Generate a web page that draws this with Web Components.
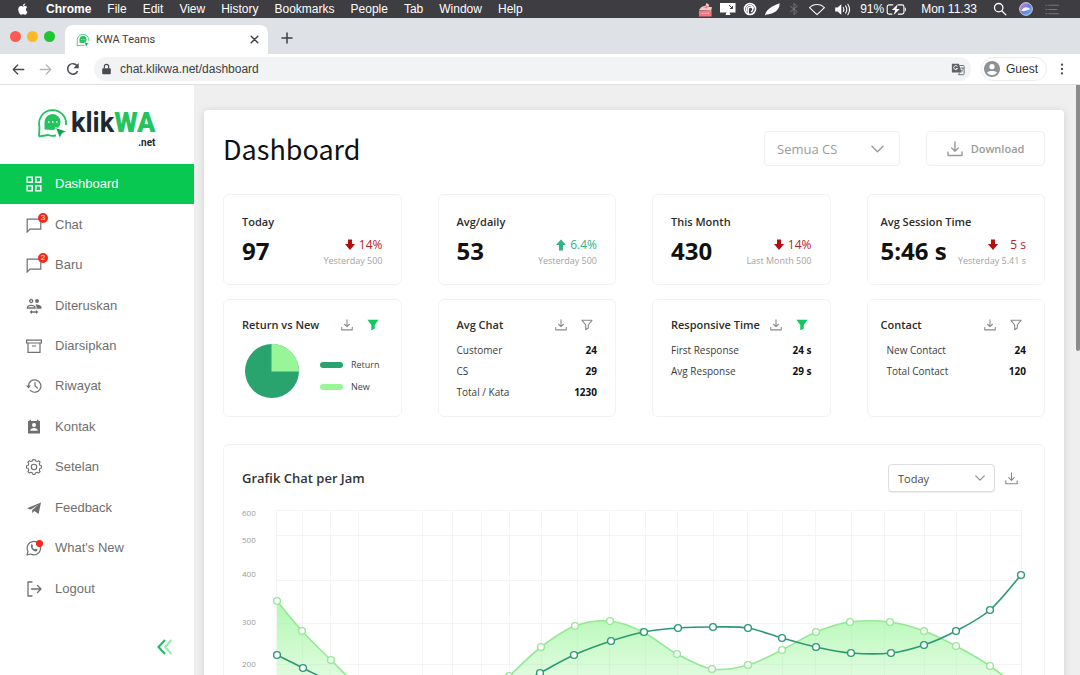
<!DOCTYPE html>
<html lang="id">
<head>
<meta charset="utf-8">
<meta name="viewport" content="width=device-width, initial-scale=1">
<title>KWA Teams</title>
<style>
  html, body { margin: 0; height: 100%; }
  body { overflow: hidden; font-family: "Liberation Sans", Arial, sans-serif; background: #efefef; }
</style>
</head>
<body>
<kwa-desktop></kwa-desktop>

<script>
const define = (name, html, setup) => {
  const tpl = document.createElement('template');
  tpl.innerHTML = html;
  customElements.define(name, class extends HTMLElement {
    constructor() {
      super();
      this.attachShadow({ mode: 'open' }).append(tpl.content.cloneNode(true));
    }
    connectedCallback() { if (setup) setup.call(this, this.shadowRoot); }
  });
};

/* ---------- icons: [viewBox, markup] ---------- */
const line = (w, body) => `<g fill="none" stroke="currentColor" stroke-width="${w}" stroke-linecap="round" stroke-linejoin="round">${body}</g>`;
const ICONS = {
  apple: ['0 0 24 24', '<path fill="currentColor" d="M17.1 12.7c0-2.4 2-3.6 2.1-3.7-1.2-1.7-3-1.9-3.6-2-1.500-.2-3 .9-3.700.9-.8 0-2-.9-3.200-.9-1.700 0-3.200 1-4.100 2.500-1.700 3-.4 7.500 1.300 10 .8 1.200 1.800 2.500 3.100 2.500 1.300-.1 1.700-.8 3.200-.8s1.900.8 3.200.8 2.200-1.200 3-2.400c.9-1.400 1.300-2.700 1.300-2.800 0 0-2.600-1-2.600-4.100zM14.700 5.500c.7-.8 1.100-2 1-3.100-1 0-2.200.7-2.900 1.500-.6.7-1.200 1.900-1 3 1.100.1 2.200-.6 2.900-1.400z"/>'],
  recorder: ['0 0 16 16', '<path fill="#f4767c" d="M1 9h13.500v6.500H1z"/><path fill="#f9c9cb" d="M1 8.500 4 5l4-1 1-3 3 2-1 2 4 .5-1 3.500z"/><path fill="#f4767c" d="m5 6 3-.5.5-2 2 1-.5 2.500z"/><path stroke="#ffd9dc" d="M4 12h8" fill="none" stroke-dasharray="2 1"/>'],
  display: ['0 0 16 16', '<path fill="currentColor" d="M0 2h15.500v9.500H9.500l1 2.500h-5l1-2.500H0z"/><path stroke="#3e3d42" d="m9 4 3.500 3.500M12.500 5v2.500H10" fill="none"/>'],
  swirl: ['0 0 16 16', '<circle cx="8" cy="8" r="6.300" fill="none" stroke="currentColor" stroke-width="1.800"/><path fill="none" stroke="currentColor" stroke-width="1.600" d="M6 14V8.500A2.600 2.600 0 1 1 9 11M4 11V8a4 4 0 0 1 8-.5"/>'],
  feather: ['0 0 18 16', '<path fill="currentColor" d="M1 15C2 8.500 8 4.500 17.500 1c.5 5-3 9-6.500 10.500-3 1.800-6 2.200-8.500 2.200z"/>'],
  bluetooth: ['0 0 16 16', line(1.1, '<path d="m4 5 7.500 6L8 14.500v-13L11.500 5 4 11"/>')],
  wifi: ['0 0 20 16', line(1.2, '<path d="M1.500 6.500C6 1.500 14 1.500 18.500 6.500L10 14.500z"/>')],
  volume: ['0 0 20 16', '<path fill="currentColor" d="M1 5.500h3l4.500-4v13L4 10.500H1z"/>' + line(1.3, '<path d="M11 5.500q1.500 2.500 0 5M13.800 3.500q3 4.500 0 9M16.600 1.500q4.200 6.500 0 13"/>')],
  battery: ['0 0 22 14', line(1.2, '<path d="M7 2H3a2 2 0 0 0-2 2v6a2 2 0 0 0 2 2h3M13 2h4a2 2 0 0 1 2 2v6a2 2 0 0 1-2 2h-4"/>') + '<path fill="currentColor" d="M12.500 1 6 7.600h3.600L8 13l6.500-6.600h-3.600zM20 5h1v4h-1z"/>'],
  search: ['0 0 16 16', line(1.5, '<circle cx="6.500" cy="6.500" r="4.800"/><path d="m10.200 10.200 4.500 4.500"/>')],
  siri: ['0 0 16 16', '<defs><linearGradient id="s" x1="0" y1="0" x2="1" y2="1"><stop offset="0" stop-color="#e58ad0"/><stop offset=".5" stop-color="#6a7be8"/><stop offset="1" stop-color="#4fc0e4"/></linearGradient></defs><circle cx="8" cy="8" r="7.300" fill="url(#s)" stroke="#d9d5e8" stroke-width="1"/><path d="M2.500 10C5 5 11 5 13.500 9 11 7.500 8 12 2.500 10z" fill="#f3f1ff"/>'],
  menulist: ['0 0 16 16', line(1.1, '<path d="M1 3.500h1M4 3.500h10.500M1 8h1M4 8h8.500M1 12.500h1M4 12.500h10.500"/>')],
  close: ['0 0 10 10', line(1.3, '<path d="m2 2 6 6M8 2 2 8"/>')],
  plus: ['0 0 12 12', line(1.5, '<path d="M6 1v10M1 6h10"/>')],
  back: ['0 0 16 16', line(1.6, '<path d="M14.500 8h-13M7 2.500 1.500 8 7 13.500"/>')],
  forward: ['0 0 16 16', line(1.6, '<path d="M1.500 8h13M9 2.500 14.500 8 9 13.500"/>')],
  reload: ['0 0 16 16', '<path d="M13.300 10.500A6 6 0 1 1 12.500 4" fill="none" stroke="currentColor" stroke-width="1.700"/><path fill="currentColor" d="M14.500 1v6H8.500z"/>'],
  lock: ['0 0 12 14', '<path fill="currentColor" d="M2 6h8a1 1 0 0 1 1 1v5a1 1 0 0 1-1 1H2a1 1 0 0 1-1-1V7a1 1 0 0 1 1-1z"/><path d="M3.500 6V4a2.500 2.500 0 0 1 5 0v2" fill="none" stroke="currentColor" stroke-width="1.400"/>'],
  translate: ['0 0 16 16', '<path fill="#5f6368" d="M1 2h8l3 10H2a1 1 0 0 1-1-1z"/><path d="M7.300 5A2.300 2.300 0 1 0 7.500 7.500H5.500" stroke="#fff" fill="none"/><path d="M9.500 4H14a1 1 0 0 1 1 1v8.500a1 1 0 0 1-1 1H8.500l1.500-2.500" fill="none" stroke="#5f6368"/><path d="M10.500 7h4M12.500 6v1M14 7q-.5 2.500-2.500 4M11 8.500l2.500 2.500" fill="none" stroke="#5f6368" stroke-width=".8"/>'],
  avatar: ['0 0 16 16', '<circle cx="8" cy="8" r="8" fill="#8d9094"/><circle cx="8" cy="5.700" r="2.600" fill="#fff"/><path fill="#fff" d="M3 11.800c1-2.300 9-2.300 10 0a6.300 6.300 0 0 1-10 0z"/>'],
  dots: ['0 0 4 16', '<g fill="currentColor"><circle cx="2" cy="3" r="1.300"/><circle cx="2" cy="8" r="1.300"/><circle cx="2" cy="13" r="1.300"/></g>'],
  mark: ['0 0 30 32', '<path d="M1.500 29.500 2 20A13.500 13.500 0 1 1 28.500 18M18.500 28.500Q14 29.500 10.500 28L1.500 29.500" fill="none" stroke="#23c45e" stroke-width="1.800"/><path d="M7 22.500V15A8 8 0 1 1 15.500 23z" fill="#23c45e"/><path d="M10.500 15h1.500M14.500 15h1.500M18.500 15H20" stroke="#fff" stroke-width="1.600"/><path d="m18 20.500 11.300 3.900-4.600 2-2.400 5.200z" fill="#12a150" stroke="#fff" stroke-width=".8"/>'],
  grid: ['0 0 16 16', '<g fill="none" stroke="currentColor" stroke-width="1.500"><path d="M1.200 1.200h5v5h-5zM9.800 1.200h5v5h-5zM1.200 9.800h5v5h-5zM9.800 9.800h5v5h-5z"/></g>'],
  chat: ['0 0 16 16', '<path d="M1.200 15V2.200h13.600v10H4z" fill="none" stroke="currentColor" stroke-width="1.200"/>'],
  people: ['0 0 16 16', '<g fill="none" stroke="currentColor" stroke-width="1.300"><circle cx="5.200" cy="3" r="1.500"/><path d="M1.500 10V8.800c1-2 6.400-2 7.400 0V10z"/></g><circle cx="11" cy="3" r="2" fill="currentColor"/><path fill="currentColor" d="M9.500 6.700c2.500-.4 5.500.5 6 2.300v1.700h-5q.4-2.500-1-4zM6 12v1.300h4V12l2.500 2L10 16v-1.300H6V16l-2.500-2z"/>'],
  archive: ['0 0 16 16', '<g fill="none" stroke="currentColor" stroke-width="1.200"><path d="M.6 2.200h14.800v2.800H.6zM2 5v9.300h12V5M6 8h4"/></g>'],
  history: ['0 0 16 16', line(1.2, '<path d="M2.500 8A6.200 6.200 0 1 1 4.300 12.400M9 4.500V8l2.300 2"/>') + '<path fill="currentColor" d="M0 7.500h5L2.500 10.500z"/>'],
  contact: ['0 0 16 16', '<path fill="currentColor" d="M2 2h1.500V.8H5V2h6V.8h1.500V2H14v12.500H2z"/><circle cx="8" cy="6" r="2" fill="#fff"/><path fill="#fff" d="M4.300 11.800c0-3.600 7.400-3.600 7.400 0z"/>'],
  gear: ['0 0 16 16', line(1.1, '<path d="m6.700 1.800.3-1.500h2l.3 1.500 2 .8 1.300-.9 1.500 1.500-.9 1.300.8 2 1.500.3v2.200l-1.500.3-.8 2 .9 1.300-1.500 1.500-1.300-.9-2 .8-.3 1.500H7l-.3-1.500-2-.8-1.300.9-1.500-1.500.9-1.300-.8-2L.500 9V6.800L2 6.500l.8-2-.9-1.300 1.500-1.500 1.300.9z"/><circle cx="8" cy="8" r="2.700"/>')],
  send: ['0 0 16 16', '<path fill="currentColor" d="M15 2.500 12.600 14 8.300 11 6.200 13.300V10l6.300-5.400-7.800 4.800L1 8.200z"/>'],
  whatsapp: ['0 0 16 16', line(1.2, '<path d="m1 15 1-3.600A6.700 6.700 0 1 1 4.600 14z"/>') + '<path fill="currentColor" d="M5 4.700c.7-.8 1.300-.5 1.500 0l.5 1.300-.6 1c.5 1.200 1.400 2 2.600 2.500l.9-.9 1.600.8c.3.400-.3 1.900-1.600 2C7 11.300 4.200 8 5 4.700z"/>'],
  logout: ['0 0 16 16', line(1.3, '<path d="M6 1H2v14h4M5.500 8H15M11.500 4.500 15 8l-3.500 3.500"/>')],
  collapse: ['0 0 16 16', '<g fill="none" stroke-width="2"><path d="M8.500 1 2 8l6.500 7" stroke="#20b866"/><path d="M15 1 8.500 8l6.500 7" stroke="#96ecab"/></g>'],
  download: ['0 0 16 16', line(1.4, '<path d="M8 1v9M4.700 7 8 10.200 11.300 7M1 11v3.500h14V11"/>')],
  filter: ['0 0 14 14', line(1.3, '<path d="M1.200 1.500h11.600L8.500 7v3.500l-3 2V7z"/>')],
  filterOn: ['0 0 14 14', '<path fill="#10c860" d="M.5 1h13L9 7v4.500L5 13V7z"/>'],
  chevron: ['0 0 14 8', line(1.5, '<path d="m1 1 6 6 6-6"/>')],
  down: ['0 0 10 12', '<path fill="currentColor" d="M3 .5h4V5h3L5 11 0 5h3z"/>'],
  up: ['0 0 10 12', '<path fill="currentColor" d="M3 11.500h4V6h3L5 .5 0 6h3z"/>'],
};

/* <kwa-icon name w h> */
define('kwa-icon', `<style>:host{display:block;flex:none}svg{display:block}</style>`, function (root) {
  const [box, body] = ICONS[this.getAttribute('name')];
  const w = this.getAttribute('w') || 16, h = this.getAttribute('h') || w;
  root.querySelector('svg')?.remove();
  root.innerHTML += `<svg viewBox="${box}" width="${w}" height="${h}" aria-hidden="true">${body}</svg>`;
});

define('mac-menubar', `<style>
  :host{display:flex;align-items:center;justify-content:space-between;height:18px;padding:0 20px 0 16px;background:#3e3d42;color:#fff}
  nav,.status{display:flex;align-items:center}
  nav{gap:16px}
  button{all:unset;font-size:12px;line-height:18px}
  .app{font-weight:700}
  .status{gap:8px;font-size:12px;line-height:18px}
  .group{display:flex;align-items:center;gap:2px}
  .icons{gap:7px}
  .end{gap:12px;margin-left:8px}
  .time{padding-left:6px}
  .dim{color:#77767b}
</style>
<nav aria-label="Menu">
  <kwa-icon name="apple" w="14"></kwa-icon>
  <button class="app">Chrome</button><button>File</button><button>Edit</button><button>View</button><button>History</button><button>Bookmarks</button><button>People</button><button>Tab</button><button>Window</button><button>Help</button>
</nav>
<div class="status">
  <span class="group icons">
    <kwa-icon name="recorder" w="15"></kwa-icon>
    <kwa-icon name="display" w="16"></kwa-icon>
    <kwa-icon name="swirl" w="14"></kwa-icon>
    <kwa-icon name="feather" w="16" h="15"></kwa-icon>
    <kwa-icon name="bluetooth" w="14" class="dim"></kwa-icon>
    <kwa-icon name="wifi" w="18" h="14"></kwa-icon>
    <kwa-icon name="volume" w="19" h="13"></kwa-icon>
  </span>
  <span class="group"><span>91%</span><kwa-icon name="battery" w="21" h="13"></kwa-icon></span>
  <span class="time">Mon 11.33</span>
  <span class="group end"><kwa-icon name="search" w="14"></kwa-icon><kwa-icon name="siri" w="14"></kwa-icon><kwa-icon name="menulist" w="15" class="dim"></kwa-icon></span>
</div>`);

define('browser-tabs', `<style>
  :host{display:flex;align-items:flex-end;height:36px;background:#dee1e6;color:#3c4043}
  .lights{display:flex;gap:6px;align-self:center;padding:0 10px}
  .lights i{width:11px;height:11px;border-radius:50%}
  .tab{display:flex;align-items:center;gap:6px;box-sizing:border-box;width:203px;height:29px;padding:0 8px 0 11px;background:#fff;border-radius:8px 8px 0 0;font-family:Roboto,sans-serif;font-size:11px;line-height:16px}
  .tab span{flex:1}
  button{all:unset;display:block}
  .new{align-self:center;padding:4px 12px 0 13px}
</style>
<div class="lights"><i style="background:#fc5a52"></i><i style="background:#fdb924"></i><i style="background:#1fc535"></i></div>
<div class="tab"><kwa-icon name="mark" w="14"></kwa-icon><span>KWA Teams</span><button aria-label="Close tab"><kwa-icon name="close" w="11"></kwa-icon></button></div>
<button class="new" aria-label="New tab"><kwa-icon name="plus" w="12"></kwa-icon></button>`);

define('browser-toolbar', `<style>
  :host{display:flex;align-items:center;gap:10px;height:30px;padding:0 16px 0 12px;background:#fff;border-bottom:1px solid #dfe0e1;color:#46494d}
  .nav{display:flex;gap:14px}
  button{all:unset;display:block}
  .off{color:#b4b6b8}
  .url{flex:1;display:flex;align-items:center;gap:8px;height:24px;margin-left:4px;padding:0 6px 0 7px;border-radius:12px;background:#f1f3f4}
  input{all:unset;flex:1;min-width:0;font-size:12px;line-height:20px;color:#3c3f43}
  .guest{display:flex;align-items:center;gap:6px;height:22px;padding:0 8px 0 2px;border-radius:12px;border:1px solid #eceded;font-size:12px;color:#303236}
  .more{padding-left:3px}
</style>
<div class="nav">
  <button aria-label="Back"><kwa-icon name="back" w="13"></kwa-icon></button>
  <button aria-label="Forward" class="off"><kwa-icon name="forward" w="13"></kwa-icon></button>
  <button aria-label="Reload"><kwa-icon name="reload" w="14"></kwa-icon></button>
</div>
<div class="url"><kwa-icon name="lock" w="11" h="12"></kwa-icon><input type="text" aria-label="Address" value="chat.klikwa.net/dashboard"><kwa-icon name="translate" w="14"></kwa-icon></div>
<button class="guest"><kwa-icon name="avatar" w="16"></kwa-icon>Guest</button>
<button class="more" aria-label="More"><kwa-icon name="dots" w="4" h="14"></kwa-icon></button>`);

define('kwa-logo', `<style>
  :host{display:block}
  a{display:flex;color:#1e2a32;text-decoration:none;font-family:Roboto,sans-serif;font-weight:700}
  .word{display:grid;justify-items:end;align-content:start;margin-left:3px}
  .name{font-size:27px;line-height:32px}
  .name b{color:#23c45e}
  .tld{font-size:10px;line-height:8px}
</style>
<a href="#home"><kwa-icon name="mark" w="31" h="32"></kwa-icon><span class="word"><span class="name">klik<b>WA</b></span><span class="tld">.net</span></span></a>`);

define('nav-item', `<style>
  :host{display:grid}
  a{display:flex;align-items:center;gap:13px;padding:0 0 0 26px;color:#6f6f6f;text-decoration:none;font-size:13px;line-height:20px}
  :host([active]) a{background:#09c852;color:#fff}
  .ic{position:relative}
  .badge{position:absolute;top:-4px;left:12px;width:10px;height:10px;border-radius:50%;background:#f7261a;color:#fff;font-size:8px;line-height:10px;text-align:center}
  .badge.dot{top:0;left:10px;width:7px;height:7px}
</style>
<a><span class="ic"></span><slot></slot></a>`, function (root) {
  root.querySelector('a').href = '#' + this.getAttribute('icon');
  const count = this.getAttribute('badge');
  const badge = count === null ? '' : `<span class="badge${count ? '' : ' dot'}">${count}</span>`;
  root.querySelector('.ic').innerHTML = `<kwa-icon name="${this.getAttribute('icon')}" w="16"></kwa-icon>${badge}`;
});

define('kwa-sidebar', `<style>
  :host{display:flex;flex-direction:column;width:194px;flex:none;background:#fff}
  kwa-logo{padding:22px 0 17px 37px}
  nav{display:grid;grid-auto-rows:1fr;min-height:445px}
  button{all:unset;align-self:flex-end;margin:30px 21px 0 0}
</style>
<kwa-logo></kwa-logo>
<nav aria-label="Utama">
  <nav-item icon="grid" active>Dashboard</nav-item>
  <nav-item icon="chat" badge="3">Chat</nav-item>
  <nav-item icon="chat" badge="2">Baru</nav-item>
  <nav-item icon="people">Diteruskan</nav-item>
  <nav-item icon="archive">Diarsipkan</nav-item>
  <nav-item icon="history">Riwayat</nav-item>
  <nav-item icon="contact">Kontak</nav-item>
  <nav-item icon="gear">Setelan</nav-item>
  <nav-item icon="send">Feedback</nav-item>
  <nav-item icon="whatsapp" badge="">What's New</nav-item>
  <nav-item icon="logout">Logout</nav-item>
</nav>
<button aria-label="Tutup menu"><kwa-icon name="collapse" w="17" h="16"></kwa-icon></button>`);

/* drop-down with its own chevron */
define('kwa-select', `<style>
  :host{display:grid;grid-template-columns:1fr;align-items:center;box-sizing:border-box;width:136px;height:35px;border:1px solid #f0f0f0;border-radius:4px;background:#fff;color:#9b9b9b;font-size:13px}
  :host([small]){width:107px;height:28px;border-color:#ddd;color:#4a4a4a;font-size:11px;box-shadow:0 1px 1px #0001}
  select{grid-area:1/1;appearance:none;border:0;outline:0;background:none;height:100%;padding:0 12px;font:inherit;color:inherit}
  :host([small]) select{padding:0 9px}
  kwa-icon{grid-area:1/1;justify-self:end;margin-right:15px;pointer-events:none}
  :host([small]) kwa-icon{margin-right:9px;color:#888}
</style>
<select><option></option></select>`, function (root) {
  const s = root.querySelector('select');
  s.setAttribute('aria-label', this.getAttribute('label'));
  s.options[0].text = this.getAttribute('value');
  const small = this.hasAttribute('small');
  const icon = document.createElement('kwa-icon');
  icon.setAttribute('name', 'chevron');
  icon.setAttribute('w', small ? 10 : 13);
  icon.setAttribute('h', small ? 6 : 8);
  root.append(icon);
});

define('kwa-card', `<style>
  :host{display:block;box-sizing:border-box;border:1px solid #f2f2f2;border-radius:6px;background:#fff}
</style><slot></slot>`);

define('stat-card', `<style>
  :host{display:grid;grid-template-columns:minmax(0,1fr)}
  kwa-card{padding:19px 18px 17px}
  :host([tight]) kwa-card{padding-left:13px}
  h2{margin:0;font-size:11px;line-height:16px;font-weight:600;color:#2d2d2d}
  .row{display:flex;justify-content:space-between;margin-top:5px;white-space:nowrap}
  .num{font-size:24px;line-height:32px;font-weight:700;color:#111}
  .side{display:grid;justify-items:end;align-content:start}
  .delta{display:flex;align-items:center;gap:4px;font-size:12px;line-height:20px;color:#b5222b}
  .arrow{color:#b50d12}
  :host([trend=up]) .delta,:host([trend=up]) .arrow{color:#33b285}
  :host([tight]) .delta{gap:12px}
  small{font-size:9px;line-height:12px;color:#a3a3a3}
</style>
<kwa-card><h2></h2><div class="row"><span class="num"></span><span class="side"><span class="delta"><span class="arrow"></span><slot></slot></span><small></small></span></div></kwa-card>`, function (root) {
  root.querySelector('h2').textContent = this.getAttribute('label');
  root.querySelector('.num').textContent = this.getAttribute('value');
  root.querySelector('small').textContent = this.getAttribute('note');
  root.querySelector('.arrow').innerHTML = `<kwa-icon name="${this.getAttribute('trend')}" w="10" h="12"></kwa-icon>`;
});

define('detail-card', `<style>
  :host{display:grid;grid-template-columns:minmax(0,1fr)}
  kwa-card{padding:16px 22px 12px 18px}
  :host([tight]) kwa-card{padding-left:13px}
  header,.tools{display:flex;align-items:center}
  header{gap:8px;height:18px;white-space:nowrap}
  .tools{gap:14px}
  h2{flex:1;min-width:0;margin:0;font-size:11px;line-height:18px;font-weight:600;color:#2d2d2d}
  button{all:unset;display:block;color:#8a8a8a}
</style>
<kwa-card><header><h2></h2><span class="tools"><button aria-label="Unduh"><kwa-icon name="download" w="12"></kwa-icon></button><button class="f" aria-label="Filter"></button></span></header><slot></slot></kwa-card>`, function (root) {
  root.querySelector('h2').textContent = this.getAttribute('label');
  root.querySelector('.f').innerHTML = `<kwa-icon name="${this.hasAttribute('filtered') ? 'filterOn' : 'filter'}" w="12"></kwa-icon>`;
});

/* rows="label=value;label=value" */
define('kwa-figures', `<style>
  :host{display:block;margin:6px -4px 0 0}
  :host([inset]){padding-left:6px}
  table{width:100%;border-collapse:collapse;font-size:10px;line-height:21px;white-space:nowrap}
  th,td{padding:0}
  th{text-align:left;font-weight:400;color:#3c3c3c}
  td{text-align:right;font-weight:700;color:#111}
</style><table><tbody></tbody></table>`, function (root) {
  root.querySelector('tbody').innerHTML = this.getAttribute('rows').split(';').map(r => {
    const [k, v] = r.split('=');
    return `<tr><th scope="row">${k}</th><td>${v}</td></tr>`;
  }).join('');
});

define('kwa-pie', `<style>
  :host{display:flex;align-items:flex-end;gap:21px;margin:10px 0 0 3px}
  svg{display:block;flex:none}
  ul{display:grid;list-style:none;margin:0;padding:0}
  li{display:flex;align-items:center;gap:8px;font-size:9px;line-height:22px;color:#444}
  i{width:23px;height:6px;border-radius:3px;background:#2aa46f}
  .new i{background:#98f598}
</style>
<svg viewBox="0 0 54 54" width="54" height="54" role="img" aria-label="Return 75%, New 25%"><circle cx="27" cy="27" r="27" fill="#2aa46f"/><path d="M26.500 0A27 27 0 0 1 54 27.500H26.500z" fill="#98f598"/></svg>
<ul><li><i></i>Return</li><li class="new"><i></i>New</li></ul>`);

/* line chart: coordinates are in the drawing's own 784-unit-wide space */
define('hourly-chart', `<style>
  :host{display:block}
  svg{display:block;width:100%;height:auto}
  text{font-size:8px;fill:#9a9a9a}
</style>`, function (root) {
  const columns = [34, 60, 88, 116, 180, 210, 239, 267, 299, 335, 367, 403, 435, 471, 505, 540, 573, 609, 642, 682, 714, 748, 779];
  const scale = [[600, 4, 8], [500, 29, 35], [400, 74, 69], [300, 117, 117], [200, 158, 159]];
  const fresh = [[35, 95], [60, 125], [89, 154], [116, 180], [149, 202], [180, 214], [210, 208], [239, 192], [267, 170], [299, 141], [333, 120], [368, 115], [401, 126], [435, 148], [470, 163], [506, 159], [540, 144], [574, 126], [608, 116], [648, 116], [682, 125], [714, 140], [748, 160], [779, 184]];
  const back = [[35, 149], [61, 162], [89, 176], [116, 188], [149, 200], [180, 207], [210, 206], [239, 197], [267, 184], [298, 167], [332, 149], [369, 135], [402, 126], [436, 122], [471, 121], [506, 122], [540, 132], [574, 141], [609, 147], [649, 147], [682, 139], [714, 125], [748, 104], [779, 69]];
  const curve = p => p.slice(1).reduce((d, b, i) => {
    const a = p[i], z = p[i - 1] || a, c = p[i + 2] || b;
    return d + `C${a[0] + (b[0] - z[0]) / 6} ${a[1] + (b[1] - z[1]) / 6} ${b[0] - (c[0] - a[0]) / 6} ${b[1] - (c[1] - a[1]) / 6} ${b[0]} ${b[1]}`;
  }, `M${p[0]}`);
  const series = (p, color) => `<path d="${curve(p)}" fill="none" stroke="${color}" stroke-width="1.600"/>` +
    p.map(([x, y]) => `<circle cx="${x}" cy="${y}" r="3.400" fill="#fff" stroke="${color}" stroke-width="1.400"/>`).join('');
  root.innerHTML += `<svg viewBox="0 0 784 260" role="img" aria-label="Grafik Chat per Jam">
    <defs><linearGradient id="g" x1="0" y1="0" x2="0" y2="1"><stop offset="0" stop-color="#98f598" stop-opacity=".75"/><stop offset=".7" stop-color="#98f598" stop-opacity=".12"/><stop offset="1" stop-color="#98f598" stop-opacity="0"/></linearGradient></defs>
    <path stroke="#f4f4f4" fill="none" d="${columns.map(x => `M${x}.500 4V250`).join('')}${scale.map(s => `M34 ${s[1]}.500H780`).join('')}"/>
    ${scale.map(s => `<text x="0" y="${s[2] + 2}">${s[0]}</text>`).join('')}
    <path d="${curve(fresh)}V250H35z" fill="url(#g)"/>
    ${series(fresh, '#94e896')}${series(back, '#2c9a70')}
  </svg>`;
});

define('chart-card', `<style>
  :host{display:block}
  kwa-card{padding:18px 18px 20px}
  header{display:flex;align-items:center;gap:10px;height:30px;padding-right:8px;margin-bottom:13px}
  h2{flex:1;margin:0;font-size:13px;line-height:18px;font-weight:600;color:#333}
  button{all:unset;display:block;color:#8a8a8a}
</style>
<kwa-card><header><h2>Grafik Chat per Jam</h2><kwa-select small label="Periode" value="Today"></kwa-select><button aria-label="Unduh grafik"><kwa-icon name="download" w="13"></kwa-icon></button></header><hourly-chart></hourly-chart></kwa-card>`);

define('dashboard-page', `<style>
  :host{display:block;padding:21px 19px 24px;background:#fff;border-radius:4px 4px 0 0;box-shadow:0 1px 8px #0000001f;font-family:"Open Sans","Noto Sans",sans-serif}
  header{display:flex;align-items:center;gap:26px;margin-bottom:28px}
  h1{flex:1;margin:0;font-family:"Noto Sans CJK SC","Noto Sans",sans-serif;font-size:27px;line-height:35px;font-weight:400;color:#111}
  .dl{all:unset;display:flex;align-items:center;justify-content:center;gap:8px;box-sizing:border-box;width:119px;height:35px;border:1px solid #f0f0f0;border-radius:4px;color:#9b9b9b;font-size:11px;font-weight:600}
  .cards{display:grid;grid-template-columns:repeat(4,minmax(0,1fr));gap:14px 36px;margin-bottom:27px}
  detail-card{min-height:118px}
</style>
<header><h1>Dashboard</h1><kwa-select label="CS" value="Semua CS"></kwa-select><button class="dl"><kwa-icon name="download" w="16"></kwa-icon>Download</button></header>
<section class="cards">
  <stat-card label="Today" value="97" note="Yesterday 500" trend="down">14%</stat-card>
  <stat-card label="Avg/daily" value="53" note="Yesterday 500" trend="up">6.4%</stat-card>
  <stat-card label="This Month" value="430" note="Last Month 500" trend="down">14%</stat-card>
  <stat-card label="Avg Session Time" value="5:46 s" note="Yesterday 5.41 s" trend="down" tight>5 s</stat-card>
  <detail-card label="Return vs New" filtered><kwa-pie></kwa-pie></detail-card>
  <detail-card label="Avg Chat"><kwa-figures rows="Customer=24;CS=29;Total / Kata=1230"></kwa-figures></detail-card>
  <detail-card label="Responsive Time" filtered><kwa-figures rows="First Response=24 s;Avg Response=29 s"></kwa-figures></detail-card>
  <detail-card label="Contact" tight><kwa-figures inset rows="New Contact=24;Total Contact=120"></kwa-figures></detail-card>
</section>
<chart-card></chart-card>`);

define('kwa-desktop', `<style>
  :host{display:flex;flex-direction:column;height:100vh}
  .view{flex:1;min-height:0;display:flex;overflow:hidden;background:#efefef}
  main{flex:1;min-width:0;padding:25px 12px 0 10px}
  .bar{width:4px;height:45%;background:#8b8b8b;border-radius:0 0 2px 2px}
</style>
<mac-menubar></mac-menubar>
<browser-tabs></browser-tabs>
<browser-toolbar></browser-toolbar>
<div class="view"><kwa-sidebar></kwa-sidebar><main><dashboard-page></dashboard-page></main><div class="bar"></div></div>`);
</script>
</body>
</html>
